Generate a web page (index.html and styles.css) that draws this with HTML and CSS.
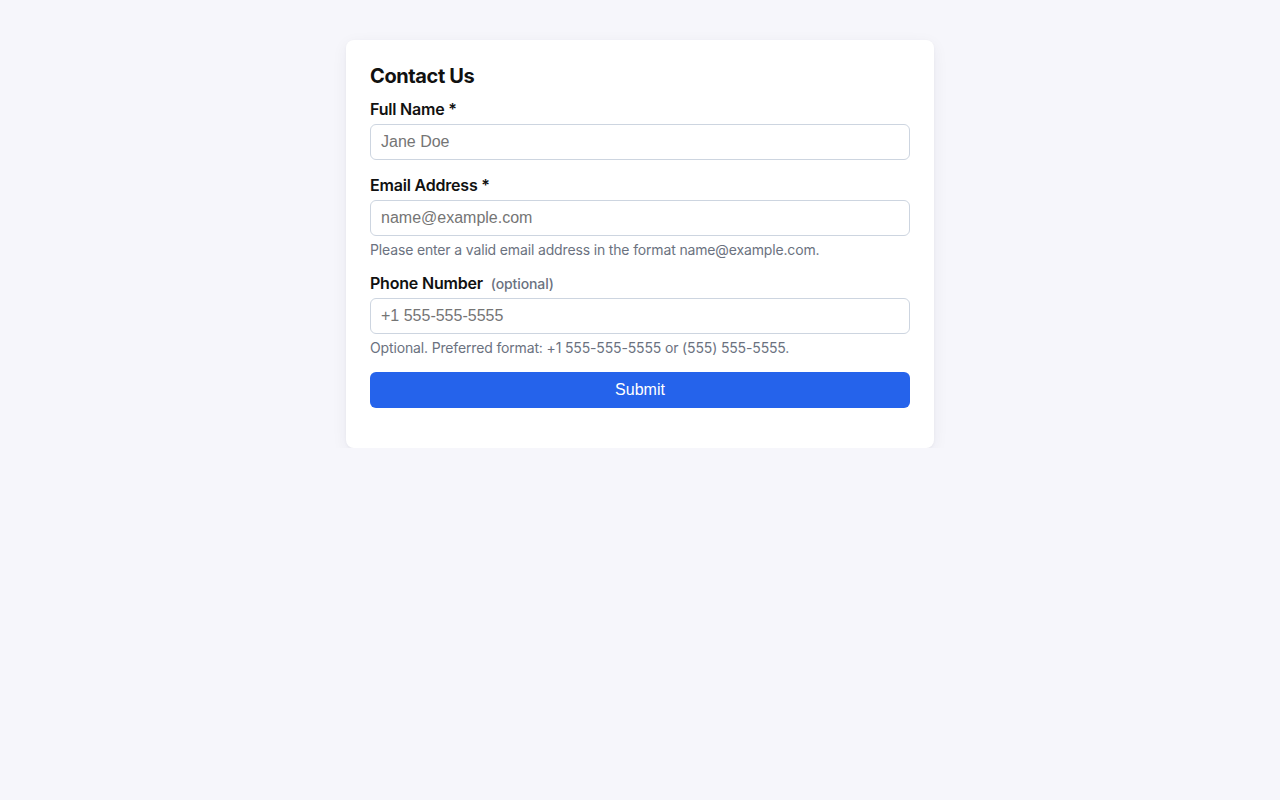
FILE: index.html
```
<!DOCTYPE html>
<html lang="en">
<head>
<meta charset="utf-8">
<title>Contact Us</title>
<link rel="stylesheet" href="styles.css">
</head>
<body>
<main class="page">
  <form class="card">
    <h1 class="title">Contact Us</h1>
    <div class="field">
      <label class="label" for="name">Full Name *</label>
      <input class="input" id="name" type="text" placeholder="Jane Doe">
    </div>
    <div class="field">
      <label class="label" for="email">Email Address *</label>
      <input class="input" id="email" type="email" placeholder="name@example.com">
      <p class="help">Please enter a valid email address in the format name@example.com.</p>
    </div>
    <div class="field">
      <label class="label" for="phone">Phone Number <span class="optional">(optional)</span></label>
      <input class="input" id="phone" type="tel" placeholder="+1 555-555-5555">
      <p class="help">Optional. Preferred format: +1 555-555-5555 or (555) 555-5555.</p>
    </div>
    <button class="submit" type="button">Submit</button>
  </form>
</main>
</body>
</html>
```
FILE: styles.css
```
html, body {
  margin: 0;
  padding: 0;
  background: #f6f6fb;
  font-family: Inter, "Liberation Sans", sans-serif;
  color: #111111;
}
.page {
  display: flex;
  justify-content: center;
  padding-top: 40px;
}
.card {
  box-sizing: border-box;
  width: 588px;
  background: #ffffff;
  border-radius: 8px;
  padding: 24px 24px 40px;
  box-shadow: 0 4px 16px rgba(30, 30, 60, 0.06), 0 1px 3px rgba(30, 30, 60, 0.04);
  display: flex;
  flex-direction: column;
}
.title {
  margin: 0 0 11px;
  font-size: 20px;
  line-height: 24px;
  font-weight: 700;
  letter-spacing: -0.4px;
  color: #111111;
}
.field {
  display: flex;
  flex-direction: column;
  margin-bottom: 15px;
}
.field:last-of-type {
  margin-bottom: 16px;
}
.label {
  display: block;
  height: 20px;
  font-size: 16px;
  line-height: 20px;
  font-weight: 600;
  letter-spacing: -0.2px;
  margin-bottom: 5px;
  color: #111111;
}
.optional {
  font-size: 14px;
  line-height: 1;
  font-weight: 500;
  letter-spacing: -0.1px;
  color: #6b7280;
  margin-left: 4px;
}
.input {
  box-sizing: border-box;
  height: 36px;
  width: 100%;
  border: 1px solid #cdd5e0;
  border-radius: 6px;
  padding: 0 10px;
  font-family: "Liberation Sans", Arial, sans-serif;
  font-size: 16px;
  color: #111111;
  background: #ffffff;
  outline: none;
}
.input::placeholder {
  color: #757575;
}
.help {
  margin: 6px 0 0;
  font-size: 14px;
  line-height: 16px;
  letter-spacing: -0.15px;
  color: #6b7280;
}
.submit {
  height: 36px;
  border: none;
  border-radius: 6px;
  background: #2563eb;
  color: #ffffff;
  font-family: "Liberation Sans", Arial, sans-serif;
  font-size: 16px;
  cursor: pointer;
}
```
